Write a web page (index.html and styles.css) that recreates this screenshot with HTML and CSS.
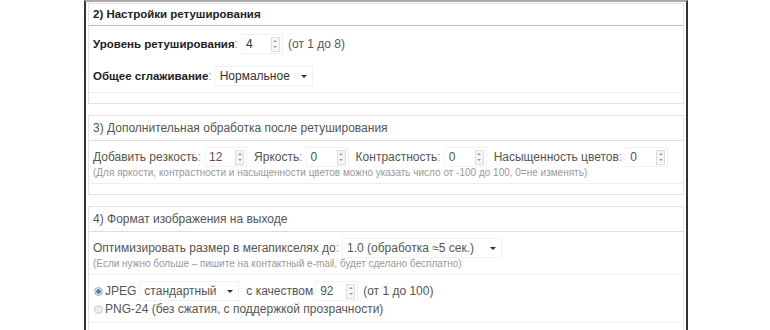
FILE: index.html
```html
<!DOCTYPE html>
<html lang="ru">
<head>
    <meta charset="UTF-8">
    <title>Настройки ретуширования</title>
    <link rel="stylesheet" href="styles.css">
</head>
<body>
    <div class="frame">
        <div class="panel panel-first">
            <div class="panel-title bold">2) Настройки ретуширования</div>
            <div class="panel-body">
                <div class="row row-tall">
                    <span class="bold">Уровень ретуширования</span><span class="colon">:</span>
                    <span class="num w42"><span class="val">4</span><span class="spin"><i class="up"></i><i class="down"></i></span></span>
                    <span class="after">(от 1 до 8)</span>
                </div>
                <div class="row row-tall">
                    <span class="bold">Общее сглаживание</span><span class="colon">:</span>
                    <span class="select w98"><span class="val">Нормальное</span><span class="caret"></span></span>
                </div>
            </div>
            <div class="panel-foot"></div>
        </div>

        <div class="panel">
            <div class="panel-title">3) Дополнительная обработка после ретуширования</div>
            <div class="panel-body">
                <div class="row">
                    <span>Добавить резкость</span><span class="colon">:</span>
                    <span class="num w43"><span class="val">12</span><span class="spin"><i class="up"></i><i class="down"></i></span></span>
                    <span class="gap">Яркость</span><span class="colon">:</span>
                    <span class="num w43"><span class="val">0</span><span class="spin"><i class="up"></i><i class="down"></i></span></span>
                    <span class="gap">Контрастность</span><span class="colon">:</span>
                    <span class="num w43"><span class="val">0</span><span class="spin"><i class="up"></i><i class="down"></i></span></span>
                    <span class="gap">Насыщенность цветов</span><span class="colon">:</span>
                    <span class="num w43"><span class="val">0</span><span class="spin"><i class="up"></i><i class="down"></i></span></span>
                </div>
                <div class="note">(Для яркости, контрастности и насыщенности цветов можно указать число от -100 до 100, 0=не изменять)</div>
            </div>
            <div class="panel-foot"></div>
        </div>

        <div class="panel">
            <div class="panel-title">4) Формат изображения на выходе</div>
            <div class="panel-body">
                <div class="row">
                    <span>Оптимизировать размер в мегапикселях до</span><span class="colon">:</span>
                    <span class="select w160"><span class="val">1.0 (обработка ≈5 сек.)</span><span class="caret"></span></span>
                </div>
                <div class="note">(Если нужно больше – пишите на контактный e-mail, будет сделано бесплатно)</div>
            </div>
            <div class="panel-body radios">
                <div class="row row-short">
                    <span class="radio checked"></span>
                    <span>JPEG</span>
                    <span class="select w100"><span class="val">стандартный</span><span class="caret"></span></span>
                    <span class="plain">с качеством</span>
                    <span class="num w43"><span class="val">92</span><span class="spin"><i class="up"></i><i class="down"></i></span></span>
                    <span class="after">(от 1 до 100)</span>
                </div>
                <div class="row row-short">
                    <span class="radio"></span>
                    <span>PNG-24 (без сжатия, с поддержкой прозрачности)</span>
                </div>
            </div>
            <div class="panel-foot"></div>
        </div>
    </div>
</body>
</html>
```

FILE: styles.css
```css
body {
    margin: 0;
    background-color: white;
    font-family: "Liberation Sans", Arial, sans-serif;
    font-size: 12px;
    color: #555;
    overflow: hidden;
}
.frame {
    margin-left: 84px;
    width: 596px;
    height: 330px;
    border-left: 2px solid #333;
    border-right: 2px solid #333;
    border-top: 2px solid #aaa;
    padding: 1px 2px 0 2px;
}
.panel {
    border: 1px solid #e2e2e2;
    margin-bottom: 11px;
}
.panel-title {
    padding: 0 4px;
    height: 24px;
    line-height: 24px;
    border-bottom: 1px solid #ddd;
}
.panel-first .panel-title {
    height: 21px;
    line-height: 20px;
    border-bottom-color: #bbb;
}
.bold {
    font-weight: bold;
    font-size: 11.5px;
    color: #222;
}
.panel-body {
    padding: 6px 4px 4px 4px;
    border-bottom: 1px solid #eee;
}
.panel-first .panel-body {
    padding: 2px 4px 0 4px;
}
.panel-body.radios {
    padding: 7px 4px 4px 4px;
}
.panel-foot {
    height: 10px;
}
.row {
    display: flex;
    align-items: center;
    height: 20px;
    white-space: nowrap;
}
.row-tall {
    height: 32px;
}
.row-short {
    height: 18px;
}
.colon {
    color: #999;
    margin-right: 3px;
}
.gap {
    margin-left: 7px;
}
.plain {
    margin: 0 2px 0 7px;
}
.after {
    margin-left: 5px;
}
.note {
    font-size: 10px;
    color: #999;
    height: 12px;
    line-height: 12px;
}
.num, .select {
    display: flex;
    align-items: center;
    height: 20px;
    border: 1px solid #f0f0f0;
    border-left-color: #f6f6f6;
    box-sizing: border-box;
    padding-left: 4px;
    color: #555;
}
.panel-first .num, .panel-first .select {
    color: #333;
}
.val {
    flex: 1;
}
.w42 { width: 42px; }
.w43 { width: 43px; }
.w98 { width: 98px; }
.w100 { width: 100px; margin-left: 3px; }
.w160 { width: 160px; }
.spin {
    width: 9px;
    height: 15px;
    margin-right: 2px;
    border: 1px solid #ddd;
    background-color: #f6f6f6;
    display: flex;
    flex-direction: column;
    align-items: center;
    justify-content: space-around;
    box-sizing: border-box;
}
.spin i {
    width: 0;
    height: 0;
    border-left: 2px solid transparent;
    border-right: 2px solid transparent;
}
.spin .up {
    border-bottom: 2px solid #999;
}
.spin .down {
    border-top: 2px solid #999;
}
.caret {
    width: 0;
    height: 0;
    margin-right: 5px;
    border-left: 3px solid transparent;
    border-right: 3px solid transparent;
    border-top: 3px solid #333;
}
.radio {
    width: 9px;
    height: 9px;
    margin: 0 2px 0 1px;
    border-radius: 50%;
    border: 1px solid #ccc;
    background-color: #eee;
    box-sizing: border-box;
}
.radio.checked {
    background: radial-gradient(circle, #4a7fc0 0, #4a7fc0 2px, #e4e8ee 2.5px);
    border-color: #aab;
}
```
